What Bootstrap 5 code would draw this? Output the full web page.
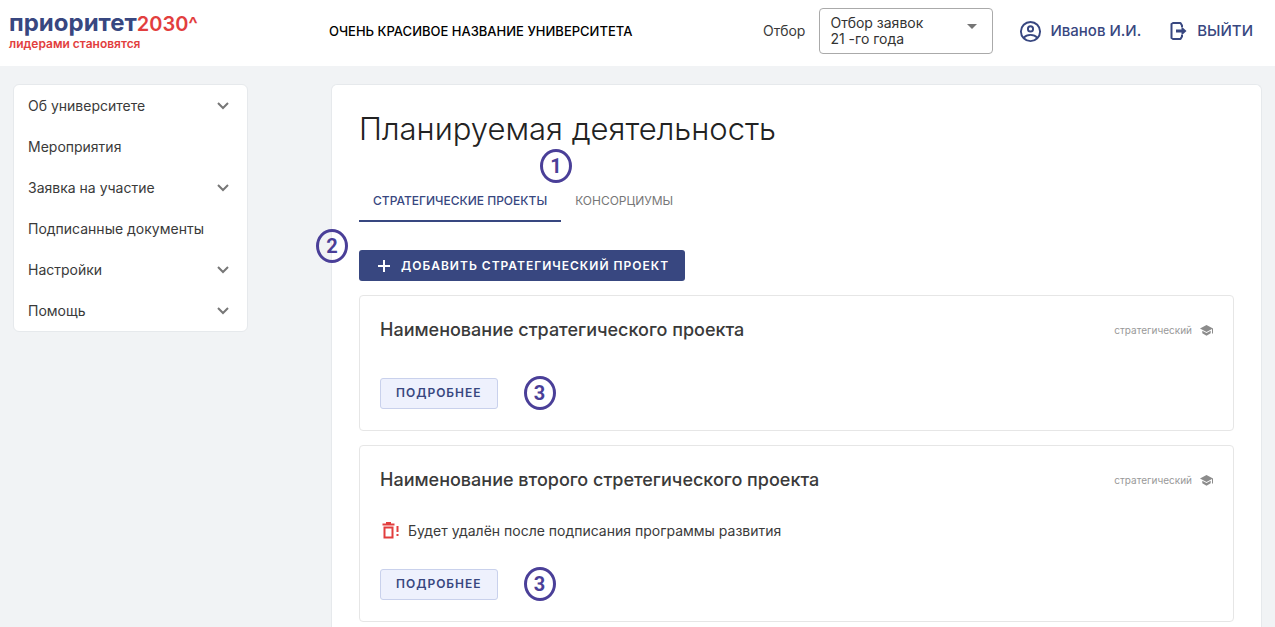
<!DOCTYPE html>
<html lang="ru">
<head>
<meta charset="utf-8">
<meta name="viewport" content="width=device-width, initial-scale=1">
<title>Планируемая деятельность</title>
<link href="https://cdn.jsdelivr.net/npm/bootstrap@5.3.0/dist/css/bootstrap.min.css" rel="stylesheet">
<style>
  :root { --brand: #384780; --accent: #e23e3e; --mark: #4a3f98; }
  body { background: #f1f3f5; color: #3a3a3a; font: 14px/20px Inter, "Noto Sans", sans-serif; }
  svg { flex: none; display: block; }
  .topbar { background: #fff; height: 66px; padding: 0 22px 4px 9px; }
  .brand { width: 320px; }
  .brand-name { font-size: 24px; line-height: 24px; font-weight: 700; color: var(--brand); }
  .brand-name span { color: var(--accent); font-size: 20px; font-weight: 600; }
  .brand-sub { font-size: 12px; line-height: 16px; font-weight: 600; color: var(--accent); }
  .uni { font-size: 13px; color: #000; }
  .round-label { font-size: 14px; }
  .round-box { margin: 0 26px 0 14px; }
  .round-select { display: block; width: 174px; height: 46px; padding: 6px 60px 6px 10px; border: 1px solid #aaa; border-radius: 4px; font-size: 14px; line-height: 16px; color: #333; background: none; appearance: none; white-space: normal; }
  .caret { position: absolute; right: 16px; top: 16px; pointer-events: none; }
  .user-links { gap: 28px; }
  .user-links a { color: var(--brand); text-decoration: none; font-size: 15px; font-weight: 500; }
  .aside { width: 331px; padding: 18px 83px 0 13px; flex: none; }
  .side-menu { background: #fff; border: 1px solid #e6e9ec; border-radius: 6px; }
  .side-menu a { height: 41px; padding: 0 18px 0 14px; color: #3a3a3a; text-decoration: none; }
  .page { margin: 18px 13px 0 0; padding: 27px 27px 4px; background: #fff; border: 1px solid #e6e9ec; border-bottom: 0; border-radius: 6px 6px 0 0; }
  .page h1 { font-size: 31px; line-height: 34px; font-weight: 300; color: #222; margin: 0 0 35px; }
  .tabs { margin-bottom: 28px; }
  .tabs a { padding: 10px 14px 9px; border-bottom: 2px solid transparent; font-size: 12px; line-height: 20px; color: #777; text-decoration: none; }
  .tabs a.active { color: var(--brand); border-color: var(--brand); font-weight: 500; }
  .btn-add, .btn-more { height: 31px; padding: 0 15px; border-radius: 3px; font-size: 12px; line-height: 20px; font-weight: 600; letter-spacing: 1px; }
  .btn-add { gap: 10px; }
  .btn-add, .btn-add:hover { background: var(--brand); color: #fff; }
  .btn-more, .btn-more:hover { background: #eef1fd; border: 1px solid #c9d1ec; color: var(--brand); }
  .project { border: 1px solid #e6e6e6; border-radius: 4px; padding: 20px; margin-top: 14px; }
  .project h2 { font-size: 18px; line-height: 28px; font-weight: 500; margin: 0; color: #3a3a3a; }
  .project-row { gap: 26px; margin-top: 32px; }
  .notice { margin: 27px 0 0; }
  .notice + .project-row { margin-top: 26px; }
  .kind { font-size: 10px; color: #999; }
  .step { width: 32px; height: 34px; border: 3px solid var(--mark); border-radius: 50%; color: var(--mark); font: 700 20px/28px Roboto, sans-serif; text-align: center; }
  .step-tabs { position: absolute; left: 181px; top: -32px; }
  .step-add { position: absolute; left: -43px; top: -21px; }
</style>
</head>
<body>
<div class="min-vh-100 d-flex flex-column">
  <header class="topbar d-flex align-items-center">
    <div class="brand">
      <div class="brand-name">приоритет<span>2030^</span></div>
      <div class="brand-sub">лидерами становятся</div>
    </div>
    <div class="fw-medium uni">ОЧЕНЬ КРАСИВОЕ НАЗВАНИЕ УНИВЕРСИТЕТА</div>
    <div class="ms-auto d-flex align-items-center">
      <label class="round-label" for="round">Отбор</label>
      <div class="round-box position-relative">
        <select class="round-select" id="round"><option>Отбор заявок 21 -го года</option></select>
        <svg class="caret" width="10" height="5" viewBox="0 0 10 5"><path d="M0 0h10L5 5z" fill="#757575"/></svg>
      </div>
      <div class="user-links d-flex">
        <a href="#" class="d-flex align-items-center gap-2">
          <svg width="23" height="23" viewBox="0 0 24 24" fill="none" stroke="#384780" stroke-width="2"><circle cx="12" cy="12" r="10"/><circle cx="12" cy="9.3" r="2.700"/><path d="M5 18.500c1.600-2 4.200-3 7-3s5.400 1 7 3"/></svg>Иванов И.И.</a>
        <a href="#" class="d-flex align-items-center gap-2">
          <svg width="20" height="20" viewBox="0 0 20 20" fill="none"><path d="M13 6V4.500L11.500 2H4L2.500 3v14L4 18h7.500l1.500-2.500V14" stroke="#384780" stroke-width="2" stroke-linejoin="round"/><path d="M7 8.500h5.500V5.500L17.500 10l-5 4.500v-3H7z" fill="#384780"/></svg>ВЫЙТИ</a>
      </div>
    </div>
  </header>

  <div class="d-flex flex-grow-1">
    <aside class="aside">
      <nav class="side-menu">
        <a href="#" class="d-flex align-items-center justify-content-between">Об университете <svg width="12" height="8" viewBox="0 0 12 8"><path d="M1 1l5 5 5-5" fill="none" stroke="#777" stroke-width="2"/></svg></a>
        <a href="#" class="d-flex align-items-center">Мероприятия</a>
        <a href="#" class="d-flex align-items-center justify-content-between">Заявка на участие <svg width="12" height="8" viewBox="0 0 12 8"><path d="M1 1l5 5 5-5" fill="none" stroke="#777" stroke-width="2"/></svg></a>
        <a href="#" class="d-flex align-items-center">Подписанные документы</a>
        <a href="#" class="d-flex align-items-center justify-content-between">Настройки <svg width="12" height="8" viewBox="0 0 12 8"><path d="M1 1l5 5 5-5" fill="none" stroke="#777" stroke-width="2"/></svg></a>
        <a href="#" class="d-flex align-items-center justify-content-between">Помощь <svg width="12" height="8" viewBox="0 0 12 8"><path d="M1 1l5 5 5-5" fill="none" stroke="#777" stroke-width="2"/></svg></a>
      </nav>
    </aside>

    <main class="page flex-grow-1">
      <h1>Планируемая деятельность</h1>
      <nav class="tabs d-flex position-relative">
        <a href="#" class="active">СТРАТЕГИЧЕСКИЕ ПРОЕКТЫ</a>
        <a href="#">КОНСОРЦИУМЫ</a>
        <span class="step step-tabs">1</span>
      </nav>
      <div class="position-relative d-flex">
        <button type="button" class="btn btn-add d-flex align-items-center">
          <svg width="16" height="14" viewBox="0 0 16 14"><path d="M9 1v12M3 7h12" stroke="#fff" stroke-width="2"/></svg>
          ДОБАВИТЬ СТРАТЕГИЧЕСКИЙ ПРОЕКТ</button>
        <span class="step step-add">2</span>
      </div>

      <section class="project">
        <div class="d-flex align-items-center justify-content-between">
          <h2>Наименование стратегического проекта</h2>
          <span class="kind d-flex align-items-center gap-2">стратегический <svg width="13" height="11" viewBox="0 0 13 11" fill="#8c8c8c"><path d="M6.500 0L0 3.500 6.500 7l5.500-3v4.500h1v-5z"/><path d="M2.300 5.800v2.500l4.200 2.400 4.200-2.400V5.800L6.500 8.100z"/></svg></span>
        </div>
        <div class="project-row d-flex align-items-center">
          <button type="button" class="btn btn-more">ПОДРОБНЕЕ</button><span class="step">3</span>
        </div>
      </section>

      <section class="project">
        <div class="d-flex align-items-center justify-content-between">
          <h2>Наименование второго стретегического проекта</h2>
          <span class="kind d-flex align-items-center gap-2">стратегический <svg width="13" height="11" viewBox="0 0 13 11" fill="#8c8c8c"><path d="M6.500 0L0 3.500 6.500 7l5.500-3v4.500h1v-5z"/><path d="M2.300 5.800v2.500l4.200 2.400 4.200-2.400V5.800L6.500 8.100z"/></svg></span>
        </div>
        <p class="notice d-flex align-items-center gap-2">
          <svg width="20" height="18" viewBox="0 0 20 18"><path d="M2.500 2.500h12M6 1h5" stroke="#e23e3e" stroke-width="2"/><path d="M4.500 5.500h8v10h-8z" fill="none" stroke="#e23e3e" stroke-width="2"/><path d="M17.500 4v6M17.500 12v2" stroke="#e23e3e" stroke-width="2"/></svg>
          Будет удалён после подписания программы развития</p>
        <div class="project-row d-flex align-items-center">
          <button type="button" class="btn btn-more">ПОДРОБНЕЕ</button><span class="step">3</span>
        </div>
      </section>
    </main>
  </div>
</div>
<script src="https://cdn.jsdelivr.net/npm/bootstrap@5.3.0/dist/js/bootstrap.bundle.min.js"></script>
</body>
</html>
